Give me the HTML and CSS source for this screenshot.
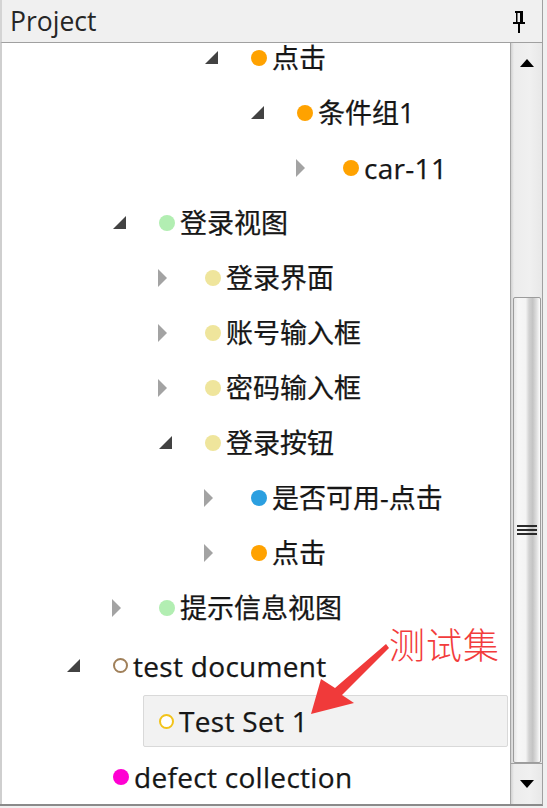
FILE: index.html
```html
<!DOCTYPE html>
<html>
<head>
<meta charset="utf-8">
<link rel="stylesheet" href="styles.css">
</head>
<body>
<div class="panel">
  <div class="header">
    <span class="title">Project</span>
    <svg class="pin" width="14" height="24" viewBox="0 0 14 24">
      <rect x="3" y="1" width="8" height="2" fill="#000"/>
      <rect x="4" y="3" width="1.5" height="9" fill="#000"/>
      <rect x="8" y="3" width="3" height="9" fill="#000"/>
      <rect x="1" y="12" width="12" height="2" fill="#000"/>
      <rect x="6" y="14" width="2" height="9" fill="#000"/>
    </svg>
  </div>
  <div class="main">
    <div class="tree">
      <div class="rows">
        <div class="row l3"><span class="exp"><svg class="ex" width="15" height="15" viewBox="0 0 15 15"><polygon points="14,1 14,14 1,14"/></svg></span><span class="item"><i class="dot orange"></i><span class="label">点击</span></span></div>
        <div class="row l4"><span class="exp"><svg class="ex" width="15" height="15" viewBox="0 0 15 15"><polygon points="14,1 14,14 1,14"/></svg></span><span class="item"><i class="dot orange"></i><span class="label">条件组1</span></span></div>
        <div class="row l5"><span class="exp"><svg class="co" width="11" height="18" viewBox="0 0 11 18"><polygon points="1,0 10,9 1,18"/></svg></span><span class="item"><i class="dot orange"></i><span class="label lat">car-11</span></span></div>
        <div class="row l1"><span class="exp"><svg class="ex" width="15" height="15" viewBox="0 0 15 15"><polygon points="14,1 14,14 1,14"/></svg></span><span class="item"><i class="dot green"></i><span class="label">登录视图</span></span></div>
        <div class="row l2"><span class="exp"><svg class="co" width="11" height="18" viewBox="0 0 11 18"><polygon points="1,0 10,9 1,18"/></svg></span><span class="item"><i class="dot yellow"></i><span class="label">登录界面</span></span></div>
        <div class="row l2"><span class="exp"><svg class="co" width="11" height="18" viewBox="0 0 11 18"><polygon points="1,0 10,9 1,18"/></svg></span><span class="item"><i class="dot yellow"></i><span class="label">账号输入框</span></span></div>
        <div class="row l2"><span class="exp"><svg class="co" width="11" height="18" viewBox="0 0 11 18"><polygon points="1,0 10,9 1,18"/></svg></span><span class="item"><i class="dot yellow"></i><span class="label">密码输入框</span></span></div>
        <div class="row l2"><span class="exp"><svg class="ex" width="15" height="15" viewBox="0 0 15 15"><polygon points="14,1 14,14 1,14"/></svg></span><span class="item"><i class="dot yellow"></i><span class="label">登录按钮</span></span></div>
        <div class="row l3"><span class="exp"><svg class="co" width="11" height="18" viewBox="0 0 11 18"><polygon points="1,0 10,9 1,18"/></svg></span><span class="item"><i class="dot blue"></i><span class="label">是否可用-点击</span></span></div>
        <div class="row l3"><span class="exp"><svg class="co" width="11" height="18" viewBox="0 0 11 18"><polygon points="1,0 10,9 1,18"/></svg></span><span class="item"><i class="dot orange"></i><span class="label">点击</span></span></div>
        <div class="row l1"><span class="exp"><svg class="co" width="11" height="18" viewBox="0 0 11 18"><polygon points="1,0 10,9 1,18"/></svg></span><span class="item"><i class="dot green"></i><span class="label">提示信息视图</span></span></div>
        <div class="row l0 top"><span class="exp"><svg class="ex" width="15" height="15" viewBox="0 0 15 15"><polygon points="14,1 14,14 1,14"/></svg></span><span class="item"><i class="dot ring brown"></i><span class="label lat">test document</span></span></div>
        <div class="row l1 selrow"><span class="exp"></span><span class="item sel"><i class="dot ring gold"></i><span class="label lat">Test Set 1</span></span></div>
        <div class="row l0"><span class="exp"></span><span class="item"><i class="dot magenta"></i><span class="label lat">defect collection</span></span></div>
      </div>
    </div>
    <div class="sb">
      <div class="sb-btn up"><svg width="14" height="8" viewBox="0 0 14 8"><polygon points="7,0 14,8 0,8" fill="#000"/></svg></div>
      <div class="track"></div>
      <div class="thumb"><span class="grip"></span><span class="grip"></span><span class="grip"></span></div>
      <div class="sb-btn down"><svg width="14" height="8" viewBox="0 0 14 8"><polygon points="0,0 14,0 7,8" fill="#000"/></svg></div>
    </div>
  </div>
</div>
<span class="note">测试集</span>
<svg class="arrow" width="547" height="808" viewBox="0 0 547 808">
  <polygon points="311,714 321,679 335,688 386,644 389,648 342,695 354,703" fill="#f03a3a"/>
</svg>
</body>
</html>
```

FILE: styles.css
```css
html, body {
  margin: 0;
  padding: 0;
}
body {
  width: 547px;
  height: 808px;
  overflow: hidden;
  background: #f0f0f0;
  font-family: "Open Sans", "Noto Sans CJK SC", sans-serif;
  color: #161616;
}
.panel {
  width: 543px;
  height: 806px;
  box-sizing: border-box;
  border-right: 1px solid #a0a0a0;
  border-bottom: 2px solid #8a8a8a;
  display: flex;
  flex-direction: column;
}
.header {
  height: 43px;
  flex: none;
  box-sizing: border-box;
  border-bottom: 1px solid #a0a0a0;
  border-left: 2px solid #d4d4d4;
  background: #f0f0f0;
  display: flex;
  align-items: center;
  justify-content: space-between;
  padding: 0 16px 0 8px;
}
.title {
  font-size: 26.5px;
  color: #262626;
  line-height: 1;
  margin-top: 1px;
}
.pin {
  display: block;
  margin-top: 2px;
}
.main {
  flex: 1;
  display: flex;
  min-height: 0;
}
.tree {
  flex: 1;
  background: #fff;
  border-left: 2px solid #cfcfcf;
  overflow: hidden;
}
.rows {
  margin-top: -13px;
}
.row {
  display: flex;
  align-items: center;
  height: 55px;
  font-size: 27px;
}
.l0 { padding-left: 47px; }
.l1 { padding-left: 93px; }
.l2 { padding-left: 139px; }
.l3 { padding-left: 185px; }
.l4 { padding-left: 231px; }
.l5 { padding-left: 277px; }
.row.top { margin-top: 3px; }
.row.selrow { height: 56px; }
.exp {
  width: 46px;
  height: 100%;
  flex: none;
  display: flex;
  align-items: center;
  justify-content: center;
}
.ex { display: block; margin-left: 2px; }
.ex polygon { fill: #424242; }
.co { display: block; margin-right: 4px; }
.co polygon { fill: #a3a3a3; }
.item {
  display: flex;
  align-items: center;
  margin-left: 2px;
  padding-left: 16px;
}
.item.sel {
  flex: 1;
  height: 52px;
  box-sizing: border-box;
  padding-left: 15px;
  margin-right: 2px;
  background: #f2f2f2;
  border: 1px solid #d9d9d9;
  border-radius: 2px;
}
.dot {
  display: block;
  width: 16px;
  height: 16px;
  border-radius: 50%;
  flex: none;
  margin-right: 5px;
}
.orange { background: #ffa200; }
.green { background: #b2eeb2; }
.yellow { background: #efe59c; }
.blue { background: #2b9fe0; }
.magenta { background: #ff00d2; }
.ring {
  box-sizing: border-box;
  background: #fff;
  border: 2.5px solid #a0805a;
  width: 15px;
  height: 15px;
}
.ring.gold { border-color: #f2c31a; }
.label {
  line-height: 1;
  white-space: nowrap;
  -webkit-text-stroke: 0.25px #161616;
}
.label.lat {
  font-size: 28px;
  letter-spacing: 0.3px;
}
.sb {
  width: 32px;
  flex: none;
  box-sizing: border-box;
  border-left: 1px solid #a6a6a6;
  background: linear-gradient(to right, #d2d2d2 0, #ececec 3px, #f0f0f0 60%, #e8e8e8 100%);
  display: flex;
  flex-direction: column;
}
.sb-btn {
  display: flex;
  align-items: center;
  justify-content: center;
  flex: none;
}
.sb-btn svg { display: block; }
.up { height: 40px; }
.track { height: 214px; flex: none; }
.thumb {
  flex: 1;
  margin: 0 1px 0 2px;
  border: 1px solid #9c9c9c;
  border-radius: 2px;
  background: linear-gradient(to right, #e6e6e6 0, #f7f7f7 15%, #f4f4f4 45%, #d2d2d2 58%, #c4c4c4 72%, #e2e2e2 88%, #fdfdfd 100%);
  display: flex;
  flex-direction: column;
  align-items: center;
  justify-content: center;
  gap: 2px;
}
.grip {
  display: block;
  width: 20px;
  height: 2px;
  background: #2a2a2a;
}
.down {
  height: 40px;
  border-top: 1px solid #a0a0a0;
}
.note {
  position: absolute;
  left: 389px;
  top: 622px;
  font-family: "Noto Sans CJK SC", sans-serif;
  font-weight: 300;
  font-size: 36px;
  line-height: 1.2;
  letter-spacing: 1px;
  color: #f23c3c;
}
.arrow {
  position: absolute;
  left: 0;
  top: 0;
  pointer-events: none;
}
```
